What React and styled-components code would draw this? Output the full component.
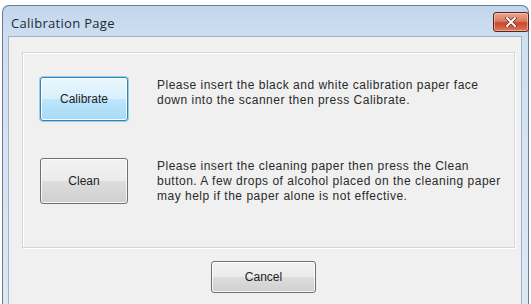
import React from "react";
import styled, { createGlobalStyle } from "styled-components";

const Global = createGlobalStyle`
    html, body {
        margin: 0;
        padding: 0;
        background: #ffffff;
        overflow: hidden;
    }
`;

const Window = styled.div`
    margin: 5px 0 0 2px;
    width: 525px;
    height: 298px;
    border: 1px solid #6b7a8c;
    border-bottom: 0;
    border-radius: 7px 7px 0 0;
    background: linear-gradient(180deg, #c2d6ec 0%, #d0e0f1 12%, #dce8f4 100%);
    display: flex;
    flex-direction: column;
`;

const TitleBar = styled.div`
    height: 30px;
    display: flex;
    align-items: flex-start;
    justify-content: space-between;
    padding-left: 8px;
`;

const Title = styled.span`
    margin-top: 8px;
    font-family: "Open Sans", "Noto Sans", sans-serif;
    font-size: 13px;
    color: #1c2a3a;
    letter-spacing: 0.3px;
`;

const CloseButton = styled.div`
    margin-top: 6px;
    margin-right: -1px;
    width: 36px;
    height: 20px;
    box-sizing: border-box;
    border: 1px solid #5e2418;
    border-radius: 3px;
    background: linear-gradient(180deg, #eaa692 0%, #db7b60 45%, #c8462c 55%, #dc7a5c 100%);
    box-shadow: inset 0 0 0 1px rgba(255, 220, 210, 0.5);
    display: flex;
    align-items: center;
    justify-content: center;
`;

const Client = styled.div`
    flex: 1;
    margin: 0 6px 0 5px;
    border: 1px solid #a3b3c6;
    border-bottom: 0;
    background: #f0f0f0;
    padding: 15px 6px 0 13px;
    display: flex;
    flex-direction: column;
`;

const GroupBox = styled.div`
    height: 196px;
    box-sizing: border-box;
    border: 1px solid #cfd6dc;
    box-shadow: inset 1px 1px 0 #ffffff, 1px 1px 0 #ffffff;
    padding: 24px 0 0 17px;
    display: flex;
    flex-direction: column;
    gap: 37px;
`;

const Row = styled.div`
    display: flex;
    align-items: flex-start;
    gap: 29px;
`;

const Button = styled.div`
    width: ${({ w }) => w}px;
    height: ${({ h }) => h}px;
    box-sizing: border-box;
    border-radius: 3px;
    border: 1px solid ${({ focus }) => (focus ? "#3c7fb1" : "#707070")};
    background: ${({ focus }) =>
        focus
            ? "linear-gradient(180deg, #eaf6fd 0%, #d9f0fc 50%, #bee6fd 51%, #a7d9f5 100%)"
            : "linear-gradient(180deg, #f2f2f2 0%, #ebebeb 50%, #dddddd 51%, #cfcfcf 100%)"};
    box-shadow: ${({ focus }) =>
        focus
            ? "0 0 0 1px #8fd4ee, inset 0 0 0 1px #ffffff"
            : "inset 0 0 0 1px rgba(255,255,255,0.8)"};
    display: flex;
    align-items: center;
    justify-content: center;
    font-family: "Liberation Sans", Arial, sans-serif;
    font-size: 12px;
    color: #1e1e1e;
    flex-shrink: 0;
`;

const Message = styled.p`
    margin: 0;
    padding-top: 1px;
    font-family: "Liberation Sans", Arial, sans-serif;
    font-size: 12px;
    letter-spacing: 0.5px;
    line-height: 15px;
    color: #2a2a2a;
    white-space: nowrap;
`;

const Footer = styled.div`
    display: flex;
    justify-content: center;
    padding-top: 13px;
    padding-right: 10px;
`;

const CloseIcon = () => (
    <svg width="12" height="10" viewBox="0 0 12 10">
        <path d="M2 1 L10 9 M10 1 L2 9" stroke="#5a1a10" strokeWidth="3.2" strokeLinecap="square" />
        <path d="M2 1 L10 9 M10 1 L2 9" stroke="#ffffff" strokeWidth="2" strokeLinecap="square" />
    </svg>
);

const App = () => (
    <>
        <Global />
        <Window>
            <TitleBar>
                <Title>Calibration Page</Title>
                <CloseButton>
                    <CloseIcon />
                </CloseButton>
            </TitleBar>
            <Client>
                <GroupBox>
                    <Row>
                        <Button w={88} h={44} focus>Calibrate</Button>
                        <Message>
                            Please insert the black and white calibration paper face
                            <br />
                            down into the scanner then press Calibrate.
                        </Message>
                    </Row>
                    <Row>
                        <Button w={88} h={46}>Clean</Button>
                        <Message>
                            Please insert the cleaning paper then press the Clean
                            <br />
                            button. A few drops of alcohol placed on the cleaning paper
                            <br />
                            may help if the paper alone is not effective.
                        </Message>
                    </Row>
                </GroupBox>
                <Footer>
                    <Button w={105} h={32}>Cancel</Button>
                </Footer>
            </Client>
        </Window>
    </>
);

export default App;
